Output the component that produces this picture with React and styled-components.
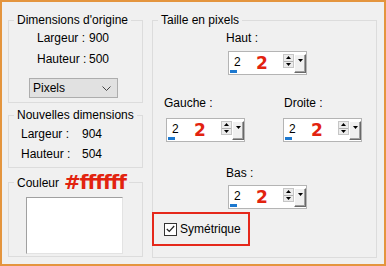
import React from 'react';
import styled, { createGlobalStyle } from 'styled-components';

const GlobalStyle = createGlobalStyle`
    body {
        margin: 0;
        background: #f0f0f0;
        font-family: 'Liberation Sans', Arial, sans-serif;
        font-size: 12px;
        color: #000;
    }
`;

const Window = styled.div`
    box-sizing: border-box;
    width: 386px;
    height: 266px;
    border: 2px solid #e4953e;
    background: #f0f0f0;
    display: flex;
    align-items: flex-start;
    gap: 9px;
    padding: 10px 0 0 6px;
`;

const Column = styled.div`
    width: 135px;
    display: flex;
    flex-direction: column;
`;

const Group = styled.fieldset`
    box-sizing: border-box;
    margin: ${p => p.$top || 0}px 0 0 0;
    padding: ${p => p.$pad || '0'};
    width: ${p => p.$width}px;
    height: ${p => (p.$height ? `${p.$height}px` : 'auto')};
    border: 1px solid #dcdcdc;
    min-width: 0;
`;

const Legend = styled.legend`
    margin-left: 5px;
    padding: 0 3px;
    line-height: 16px;
    white-space: nowrap;
`;

const Note = styled.span`
    margin-left: 5px;
    font-family: 'DejaVu Sans', sans-serif;
    font-weight: bold;
    font-size: 20px;
    letter-spacing: -1px;
    color: #e2230f;
    vertical-align: -2px;
    line-height: 16px;
`;

const InfoRow = styled.div`
    display: flex;
    line-height: 16px;
    white-space: nowrap;
    padding-left: ${p => p.$indent}px;
    margin-top: ${p => p.$gap}px;
`;

const InfoLabel = styled.span`
    flex: none;
    width: ${p => p.$width}px;
`;

const Select = styled.div`
    box-sizing: border-box;
    margin: 11px 0 0 20px;
    width: 89px;
    height: 20px;
    background: #e1e1e1;
    border: 1px solid #adadad;
    display: flex;
    align-items: center;
    justify-content: space-between;
    padding: 0 6px 0 3px;
`;

const Swatch = styled.div`
    box-sizing: border-box;
    margin-left: 17px;
    width: 97px;
    height: 57px;
    background: #fff;
    border: 1px solid;
    border-color: #a0a0a0 #e3e3e3 #e3e3e3 #a0a0a0;
`;

const Field = styled.div`
    display: flex;
    flex-direction: column;
    gap: ${p => p.$gap}px;
    line-height: 16px;
`;

const FieldLabel = styled.span`
    margin-left: ${p => p.$shift || 0}px;
`;

const Row = styled.div`
    display: flex;
    gap: ${p => p.$gap || 0}px;
    padding-left: ${p => p.$indent}px;
    margin-top: ${p => p.$top}px;
`;

const Spin = styled.div`
    box-sizing: border-box;
    width: 79px;
    height: 24px;
    background: #fff;
    border: 1px solid #b4b4b4;
    display: flex;
    align-items: flex-start;
    padding: 2px 0 0 1px;
`;

const ValueCell = styled.div`
    width: 26px;
    display: flex;
    flex-direction: column;
`;

const Value = styled.span`
    padding-left: 4px;
    line-height: 16px;
`;

const Caret = styled.span`
    width: 7px;
    height: 3px;
    background: #1c78cf;
`;

const BigTwo = styled.span`
    width: 27px;
    font-family: 'DejaVu Sans', sans-serif;
    font-weight: bold;
    font-size: 17px;
    line-height: 18px;
    color: #e2230f;
`;

const Arrows = styled.div`
    display: flex;
    flex-direction: column;
    width: 11px;
    height: 14px;
    box-sizing: border-box;
    border: 1px solid #c6c6c6;
    background: #ececec;
`;

const ArrowHalf = styled.div`
    flex: 1;
    display: flex;
    align-items: center;
    justify-content: center;
    border-top: ${p => (p.$lower ? '1px solid #b0b0b0' : 'none')};
`;

const DropButton = styled.div`
    box-sizing: border-box;
    width: 12px;
    height: 19px;
    background: #f0f0f0;
    border: 1px solid;
    border-color: #fff #696969 #696969 #fff;
    box-shadow: inset -1px -1px 0 #a0a0a0;
    display: flex;
    justify-content: center;
    padding-top: 4px;
`;

const CheckFrame = styled.div`
    box-sizing: border-box;
    margin: 3px 0 0 -1px;
    width: 98px;
    height: 34px;
    border: 2px solid #e5281b;
    display: flex;
    align-items: center;
    gap: 3px;
    padding-left: 10px;
`;

const Box = styled.span`
    box-sizing: border-box;
    width: 13px;
    height: 13px;
    border: 1px solid #333;
    background: #fff;
    display: flex;
    align-items: center;
    justify-content: center;
`;

const Tri = ({ up }) => (
    <svg width="5" height="3" viewBox="0 0 5 3">
        <polygon points={up ? '0,3 5,3 2.5,0' : '0,0 5,0 2.5,3'} fill="#000" />
    </svg>
);

const SpinBox = () => (
    <Spin>
        <ValueCell>
            <Value>2</Value>
            <Caret />
        </ValueCell>
        <BigTwo>2</BigTwo>
        <Arrows>
            <ArrowHalf><Tri up /></ArrowHalf>
            <ArrowHalf $lower><Tri /></ArrowHalf>
        </Arrows>
        <DropButton>
            <Tri />
        </DropButton>
    </Spin>
);

const SizeField = ({ label, gap, shift }) => (
    <Field $gap={gap}>
        <FieldLabel $shift={shift}>{label}</FieldLabel>
        <SpinBox />
    </Field>
);

const App = () => {
    return (
        <>
            <GlobalStyle />
            <Window>
                <Column>
                    <Group $width={135} $pad="0 0 4px 0">
                        <Legend>Dimensions d'origine</Legend>
                        <InfoRow $indent={28} $gap={2}>
                            <InfoLabel $width={52}>Largeur :</InfoLabel>
                            <span>900</span>
                        </InfoRow>
                        <InfoRow $indent={28} $gap={5}>
                            <InfoLabel $width={52}>Hauteur :</InfoLabel>
                            <span>500</span>
                        </InfoRow>
                        <Select>
                            <span>Pixels</span>
                            <svg width="9" height="5" viewBox="0 0 9 5">
                                <polyline points="0.5,0.5 4.5,4.5 8.5,0.5" fill="none" stroke="#444" strokeWidth="1" />
                            </svg>
                        </Select>
                    </Group>
                    <Group $width={135} $top={4} $pad="0 0 5px 0">
                        <Legend>Nouvelles dimensions</Legend>
                        <InfoRow $indent={12} $gap={3}>
                            <InfoLabel $width={61}>Largeur :</InfoLabel>
                            <span>904</span>
                        </InfoRow>
                        <InfoRow $indent={12} $gap={4}>
                            <InfoLabel $width={61}>Hauteur :</InfoLabel>
                            <span>504</span>
                        </InfoRow>
                    </Group>
                    <Group $width={135} $top={6} $pad="6px 0 2px 0">
                        <Legend>
                            Couleur<Note>#ffffff</Note>
                        </Legend>
                        <Swatch />
                    </Group>
                </Column>
                <Group $width={225} $height={246}>
                    <Legend>Taille en pixels</Legend>
                    <Row $indent={75} $top={2}>
                        <SizeField label="Haut :" gap={5} shift={-2} />
                    </Row>
                    <Row $indent={13} $top={20} $gap={38}>
                        <SizeField label="Gauche :" gap={7} shift={-2} />
                        <SizeField label="Droite :" gap={7} shift={1} />
                    </Row>
                    <Row $indent={75} $top={23}>
                        <SizeField label="Bas :" gap={4} shift={-2} />
                    </Row>
                    <CheckFrame>
                        <Box>
                            <svg width="9" height="8" viewBox="0 0 9 8">
                                <polyline points="0.8,4 3.3,6.5 8.2,1" fill="none" stroke="#222" strokeWidth="1.2" />
                            </svg>
                        </Box>
                        <span>Symétrique</span>
                    </CheckFrame>
                </Group>
            </Window>
        </>
    );
};

export default App;
